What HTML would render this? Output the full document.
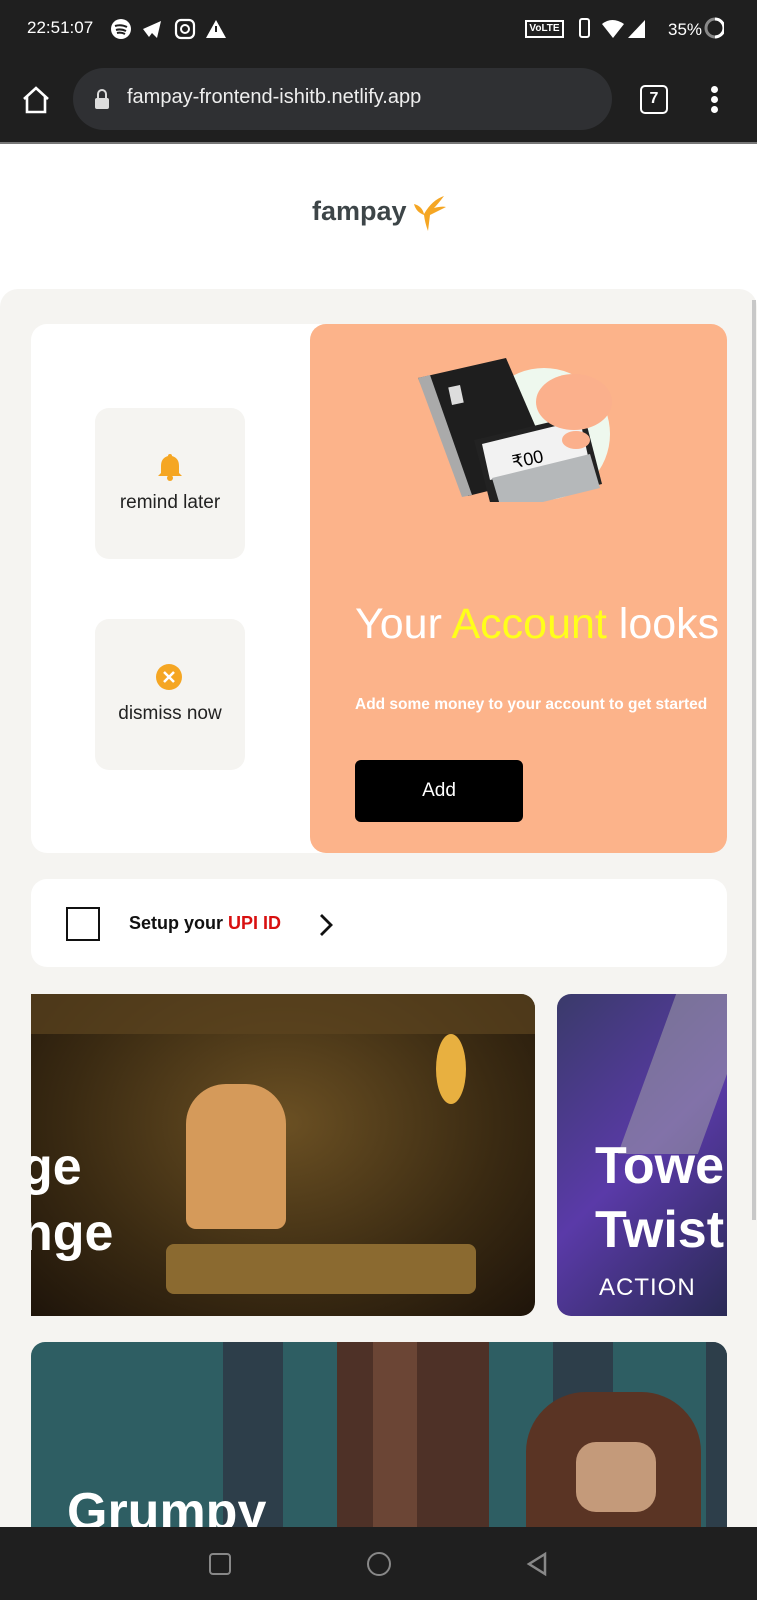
<!DOCTYPE html>
<html><head><meta charset="utf-8"><style>
*{margin:0;padding:0;box-sizing:border-box}
body{width:757px;height:1600px;overflow:hidden;background:#fff;font-family:"Liberation Sans",sans-serif;position:relative}
.abs{position:absolute}
.dark{background:#1f1f1f}
</style></head><body>
<div class="abs dark" style="left:0;top:0;width:757px;height:142px"></div>
<div class="abs" style="left:0;top:142px;width:757px;height:2px;background:#777"></div>
<div class="abs" style="left:27px;top:18px;color:#fff;font-size:17px">22:51:07</div>
<svg class="abs" style="left:110px;top:17px" width="120" height="24" viewBox="0 0 120 24">
<circle cx="11" cy="12" r="10" fill="#fff"/><path d="M5 9q6-2 12 1M6 13q5-1.5 10 1M7 16q4-1 8 1" stroke="#1f1f1f" stroke-width="2" fill="none"/>
<path d="M33 12l18-8-4 17-5-5-3 4z" fill="#fff"/>
<rect x="66" y="3" width="18" height="18" rx="5" fill="none" stroke="#fff" stroke-width="2.2"/><circle cx="75" cy="12" r="4" fill="none" stroke="#fff" stroke-width="2"/>
<path d="M106 3l10 18h-20z" fill="#fff"/><rect x="105" y="9" width="2" height="6" fill="#1f1f1f"/>
</svg>
<div class="abs" style="left:525px;top:20px;width:39px;height:18px;border:2px solid #fff;color:#fff;font-size:10px;font-weight:bold;text-align:center;line-height:14px">VoLTE</div>
<svg class="abs" style="left:574px;top:16px" width="150" height="26" viewBox="0 0 150 26">
<rect x="6" y="3" width="9" height="18" rx="2" fill="none" stroke="#fff" stroke-width="2"/>
<path d="M28 8q10-8 22 0l-11 14z" fill="#fff"/>
<path d="M54 22l17-18v18z" fill="#fff"/>
<text x="94" y="19" fill="#fff" font-size="17" font-family="Liberation Sans">35%</text>
<circle cx="141" cy="12" r="9" fill="none" stroke="#888" stroke-width="3"/><path d="M141 3a9 9 0 0 1 0 18" stroke="#fff" stroke-width="3" fill="none"/>
</svg>
<svg class="abs" style="left:20px;top:84px" width="32" height="32" viewBox="0 0 32 32"><path d="M4 15L16 4l12 11M7 13v15h18V13" fill="none" stroke="#fff" stroke-width="2.6"/></svg>
<div class="abs" style="left:73px;top:68px;width:539px;height:62px;border-radius:31px;background:#2f3033"></div>
<svg class="abs" style="left:94px;top:88px" width="16" height="22" viewBox="0 0 16 22"><path d="M4 10V6a4 4 0 0 1 8 0v4" stroke="#ddd" stroke-width="2" fill="none"/><rect x="1" y="10" width="14" height="11" rx="2" fill="#ddd"/></svg>
<div class="abs" style="left:127px;top:86px;color:#eee;font-size:20px">fampay-frontend-ishitb.netlify.app</div>
<div class="abs" style="left:640px;top:85px;width:28px;height:29px;border:2.5px solid #fff;border-radius:5px;color:#fff;font-size:16px;font-weight:bold;text-align:center;line-height:24px">7</div>
<div class="abs" style="left:711px;top:86px;width:7px;height:7px;border-radius:50%;background:#fff;box-shadow:0 10px 0 #fff,0 20px 0 #fff"></div>

<div class="abs" style="left:312px;top:196px;font-size:27px;font-weight:bold;color:#3d4548">fampay</div>
<svg class="abs" style="left:412px;top:196px" width="36" height="38" viewBox="0 0 36 38"><path d="M2 8q8 2 10 10 8-14 20-18-6 8-10 12 8-2 12-1-8 4-16 8l-2 16q-3-8-4-16Q4 16 2 8z" fill="#f5a623"/></svg>

<div class="abs" style="left:0;top:289px;width:757px;height:1311px;background:#f5f4f1;border-radius:18px 18px 0 0"></div>
<div class="abs" style="left:752px;top:300px;width:4px;height:920px;background:#c8c8c8"></div>

<div class="abs" style="left:31px;top:324px;width:696px;height:529px;background:#fff;border-radius:16px"></div>
<div class="abs" style="left:95px;top:408px;width:150px;height:151px;background:#f5f4f1;border-radius:14px"></div>
<svg class="abs" style="left:156px;top:452px" width="28" height="30" viewBox="0 0 28 30"><path d="M14 2a2 2 0 0 1 2 2q7 2 7 10v7l3 3H2l3-3v-7q0-8 7-10a2 2 0 0 1 2-2z" fill="#f5a623"/><circle cx="14" cy="26" r="3" fill="#f5a623"/></svg>
<div class="abs" style="left:95px;top:492px;width:150px;text-align:center;font-size:19px;color:#222">remind later</div>
<div class="abs" style="left:95px;top:619px;width:150px;height:151px;background:#f5f4f1;border-radius:14px"></div>
<svg class="abs" style="left:155px;top:663px" width="28" height="28" viewBox="0 0 28 28"><circle cx="14" cy="14" r="13" fill="#f5a623"/><path d="M9 9l10 10M19 9L9 19" stroke="#fff" stroke-width="2.5"/></svg>
<div class="abs" style="left:95px;top:703px;width:150px;text-align:center;font-size:19px;color:#222">dismiss now</div>

<div class="abs" style="left:310px;top:324px;width:417px;height:529px;background:#fcb38a;border-radius:16px;overflow:hidden">
<svg class="abs" style="left:104px;top:28px" width="210" height="150" viewBox="0 0 210 150">
<circle cx="130" cy="82" r="66" fill="#eef8ee"/>
<path d="M4 26l88-20 50 116-88 22z" fill="#1e1e1e"/>
<path d="M4 26l12-3 42 120-10 2z" fill="#aaa"/>
<rect x="36" y="34" width="12" height="18" fill="#ddd" transform="rotate(-12 42 43)"/>
<path d="M60 88l110-26 18 70-110 26z" fill="#222"/>
<path d="M68 92l98-24 8 36-98 24z" fill="#f2f2f2"/>
<path d="M78 126l98-24 10 34-98 24z" fill="#b5b8ba"/>
<text x="98" y="114" font-size="18" font-family="Liberation Sans" transform="rotate(-12 110 108)">₹00</text>
<ellipse cx="160" cy="50" rx="38" ry="28" fill="#fbb08c"/>
<ellipse cx="162" cy="88" rx="14" ry="9" fill="#fbb08c"/>
</svg>
<div class="abs" style="left:45px;top:276px;font-size:43px;color:#fff;white-space:nowrap">Your <span style="color:#ffff1a">Account</span> looks</div>
<div class="abs" style="left:45px;top:372px;font-size:15.5px;font-weight:bold;color:#fff;white-space:nowrap">Add some money to your account to get started</div>
<div class="abs" style="left:45px;top:436px;width:168px;height:62px;background:#000;border-radius:6px;color:#fff;font-size:19px;text-align:center;line-height:62px">Add</div>
</div>

<div class="abs" style="left:31px;top:879px;width:696px;height:88px;background:#fff;border-radius:16px"></div>
<div class="abs" style="left:66px;top:907px;width:34px;height:34px;border:2.5px solid #111"></div>
<div class="abs" style="left:129px;top:913px;font-size:18px;font-weight:bold;color:#111">Setup your <span style="color:#d81010">UPI ID</span></div>
<svg class="abs" style="left:316px;top:912px" width="20" height="26" viewBox="0 0 20 26"><path d="M5 3l10 10L5 23" stroke="#111" stroke-width="2.8" fill="none"/></svg>

<div class="abs" style="left:31px;top:994px;width:504px;height:322px;border-radius:0 14px 14px 0;overflow:hidden;background:radial-gradient(ellipse at 50% 40%,#6b5023,#3a2a12 60%,#1e140a)">
<div class="abs" style="left:0;top:0;width:504px;height:40px;background:#5c4420;opacity:.7"></div>
<div class="abs" style="left:135px;top:250px;width:310px;height:50px;background:#8b6a30;border-radius:8px"></div>
<div class="abs" style="left:155px;top:90px;width:100px;height:145px;background:#d59a5a;border-radius:40px 40px 10px 10px"></div>
<div class="abs" style="left:405px;top:40px;width:30px;height:70px;background:#e8b040;border-radius:50%"></div>
<div class="abs" style="left:-10px;top:140px;color:#fff;font-size:52px;font-weight:bold;line-height:66px">ge<br>nge</div>
</div>
<div class="abs" style="left:557px;top:994px;width:170px;height:322px;border-radius:14px 0 0 14px;overflow:hidden;background:linear-gradient(135deg,#3a3a6a,#5a3aa8 50%,#2a2a55)">
<div class="abs" style="left:90px;top:0;width:80px;height:160px;background:#aaa;opacity:.5;transform:skewX(-20deg)"></div>
<div class="abs" style="left:38px;top:140px;color:#fff;font-size:52px;font-weight:bold;line-height:64px;white-space:nowrap">Tower<br>Twist</div>
<div class="abs" style="left:42px;top:280px;color:#fff;font-size:24px;letter-spacing:1px">ACTION</div>
</div>

<div class="abs" style="left:31px;top:1342px;width:696px;height:200px;border-radius:14px 14px 0 0;overflow:hidden;background:#2e5e63">
<div class="abs" style="left:192px;top:0;width:60px;height:200px;background:#2d3e4a"></div>
<div class="abs" style="left:306px;top:0;width:152px;height:200px;background:#4e3127"></div>
<div class="abs" style="left:342px;top:0;width:44px;height:200px;background:#6b4535"></div>
<div class="abs" style="left:522px;top:0;width:60px;height:200px;background:#2d3e4a"></div>
<div class="abs" style="left:675px;top:0;width:21px;height:200px;background:#2d3e4a"></div>
<div class="abs" style="left:495px;top:50px;width:175px;height:150px;background:#5a3424;border-radius:60px 60px 0 0"></div>
<div class="abs" style="left:545px;top:100px;width:80px;height:70px;background:#c49a7a;border-radius:20px"></div>
<div class="abs" style="left:36px;top:140px;color:#fff;font-size:52px;font-weight:bold">Grumpy</div>
</div>

<div class="abs dark" style="left:0;top:1527px;width:757px;height:73px"></div>
<div class="abs" style="left:209px;top:1553px;width:22px;height:22px;border:2.5px solid #888;border-radius:4px"></div>
<div class="abs" style="left:367px;top:1552px;width:24px;height:24px;border:2.5px solid #888;border-radius:50%"></div>
<svg class="abs" style="left:525px;top:1551px" width="24" height="26" viewBox="0 0 24 26"><path d="M20 3L4 13l16 10z" fill="none" stroke="#888" stroke-width="2.5"/></svg>
</body></html>
